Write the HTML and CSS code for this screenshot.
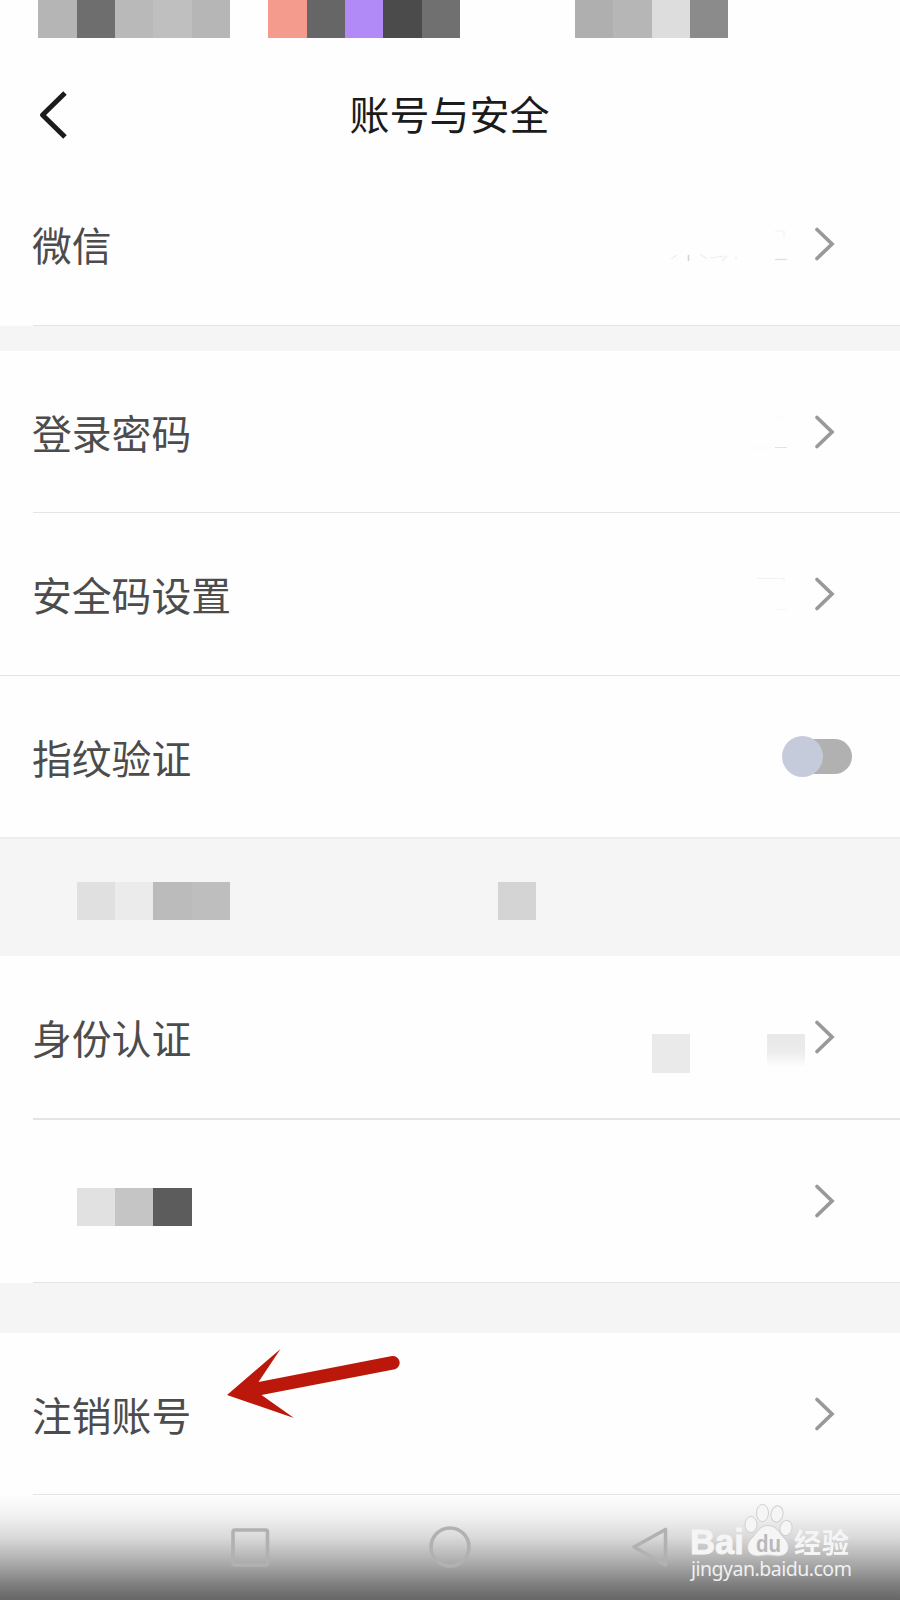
FILE: index.html
```
<!DOCTYPE html>
<html lang="zh-CN">
    <head>
        <meta charset="utf-8">
        <title>账号与安全</title>
        <link rel="stylesheet" href="styles.css">
    </head>

    <body>
        <!-- seta reutilizada em todas as linhas -->
        <svg class="sprite" aria-hidden="true">
            <symbol id="seta" viewBox="0 0 22 36">
                <path d="M3 3.5 18 18 3 32.5" fill="none" stroke="#999" stroke-width="3.7" stroke-linecap="round" />
            </symbol>
        </svg>
        <main class="tela">
            <div class="status">
                <div class="mosaico">
                    <i class="c-b5"></i><i class="c-6e"></i><i class="c-b9"></i><i class="c-bf"></i><i class="c-b6"></i>
                </div>
                <div class="mosaico status-meio">
                    <i class="c-coral"></i><i class="c-66"></i><i class="c-roxo"></i><i class="c-4b"></i><i class="c-70"></i>
                </div>
                <div class="mosaico status-fim">
                    <i class="c-af"></i><i class="c-b6"></i><i class="c-dd"></i><i class="c-8b"></i>
                </div>
            </div>

            <header class="header">
                <svg class="voltar" viewBox="0 0 30 50">
                    <path d="M27 3 4.5 25 27 47" fill="none" stroke="#1b1b1b" stroke-width="5" stroke-linejoin="round" />
                </svg>
                <h1>账号与安全</h1>
            </header>

            <section class="grupo">
                <div class="linha">
                    <span class="rotulo">微信</span>
                    <svg class="resto" viewBox="0 0 124 40" fill="none" stroke-width="1.2">
                        <path d="M8 35l6-4M37 30l7 5M47 34l14-2M59 37l5-5M73 36v-3" stroke="#eee" />
                        <path d="M25.5 31v6" stroke="#d4d4d4" stroke-width="1.6" />
                        <path d="M112 7h9v7" stroke="#f2f2f2" />
                        <path d="M112 35.5h12" stroke="#dcdcdc" />
                    </svg>
                    <svg class="seta"><use href="#seta" /></svg>
                </div>
            </section>

            <section class="grupo">
                <div class="linha">
                    <span class="rotulo">登录密码</span>
                    <svg class="resto" viewBox="0 0 124 40" fill="none" stroke-width="1">
                        <path d="M86 36h24M112 5h9v5" stroke="#fafafa" />
                        <path d="M112 35.5h12" stroke="#e2e2e2" />
                    </svg>
                    <svg class="seta"><use href="#seta" /></svg>
                </div>
                <div class="linha inteira">
                    <span class="rotulo">安全码设置</span>
                    <svg class="resto" viewBox="0 0 124 40" fill="none" stroke-width="1">
                        <path d="M94 4.5h27v4" stroke="#f2f2f2" />
                        <path d="M112 35.5h12" stroke="#f7f7f7" />
                    </svg>
                    <svg class="seta"><use href="#seta" /></svg>
                </div>
                <div class="linha inteira ultima">
                    <span class="rotulo">指纹验证</span>
                    <span class="chave"></span>
                </div>
            </section>

            <div class="faixa">
                <div class="mosaico">
                    <i class="c-e0"></i><i class="c-eb"></i><i class="c-bb"></i><i class="c-be"></i>
                </div>
                <div class="mosaico faixa-meio"><i class="c-d4"></i></div>
            </div>

            <section class="grupo">
                <div class="linha dupla">
                    <span class="rotulo">身份认证</span>
                    <div class="mosaico valor">
                        <i class="c-ea"></i><i></i><i></i><i class="some"></i>
                    </div>
                    <svg class="seta"><use href="#seta" /></svg>
                </div>
                <div class="linha">
                    <div class="mosaico oculto">
                        <i class="c-e1"></i><i class="c-c5"></i><i class="c-5c"></i>
                    </div>
                    <svg class="seta"><use href="#seta" /></svg>
                </div>
            </section>

            <section class="grupo sair">
                <div class="linha">
                    <span class="rotulo">注销账号</span>
                    <svg class="seta"><use href="#seta" /></svg>
                </div>
                <svg class="indicador" viewBox="0 0 174 72">
                    <path d="M1 47 54.5 1 32.5 34 166 8A6.8 6.8 0 0 1 169 21.2L35.5 47 68 70Z" fill="#bb180b" />
                </svg>
            </section>

            <nav class="nav">
                <svg viewBox="0 0 44 44"><rect x="5" y="5" width="34.5" height="35" rx="2" /></svg>
                <svg viewBox="0 0 44 44"><circle cx="22" cy="22" r="19" /></svg>
                <svg viewBox="0 0 44 44"><path d="M37.5 4.5V40L6 22Z" /></svg>
            </nav>

            <div class="marca">
                <svg class="logo" viewBox="0 0 162 56">
                    <g fill="#f5f5f5" stroke="#cfcfcf" stroke-width="1">
                        <ellipse cx="60" cy="21.5" rx="6" ry="8" />
                        <ellipse cx="71.5" cy="10" rx="6" ry="8.6" />
                        <ellipse cx="86" cy="11" rx="6" ry="8.2" transform="rotate(10 86 11)" />
                        <ellipse cx="95" cy="25" rx="6" ry="7.6" transform="rotate(12 95 25)" />
                        <path d="M77 22.5c8 0 11 7 16 12.500 7 6 6 18-6 18-4 0-6-1-10-1s-6 1-10 1c-12 0-13-12-6-18 5-5.500 8-12.500 16-12.500Z" />
                    </g>
                    <text class="logo-bai" x="-1" y="51" textLength="54" lengthAdjust="spacingAndGlyphs">Bai</text>
                    <text class="logo-du" x="65" y="48.500" textLength="25" lengthAdjust="spacingAndGlyphs">du</text>
                    <text class="logo-cn" x="103" y="50" textLength="55">经验</text>
                </svg>
                <span class="site">jingyan.baidu.com</span>
            </div>
        </main>
    </body>
</html>
```
FILE: styles.css
```
body {
    margin: 0;
    background-color: #fefefe;
    font-family: "Noto Sans CJK SC", sans-serif;
}

.sprite {
    display: none;
}

.tela {
    position: relative;
    width: 900px;
    height: 1600px;
    overflow: hidden;
}

/* blocos de mosaico */
.mosaico {
    display: flex;
}

.mosaico i {
    width: 38.33px;
    height: 38.33px;
}

.c-b5 { background-color: #b5b5b5; }
.c-6e { background-color: #6e6e6e; }
.c-b9 { background-color: #b9b9b9; }
.c-bf { background-color: #bfbfbf; }
.c-b6 { background-color: #b6b6b6; }
.c-coral { background-color: #f59b8d; }
.c-66 { background-color: #666; }
.c-roxo { background-color: #b28af8; }
.c-4b { background-color: #4b4b4b; }
.c-70 { background-color: #707070; }
.c-af { background-color: #afafaf; }
.c-dd { background-color: #ddd; }
.c-8b { background-color: #8b8b8b; }
.c-e0 { background-color: #e0e0e0; }
.c-eb { background-color: #ebebeb; }
.c-bb { background-color: #bbb; }
.c-be { background-color: #bebebe; }
.c-d4 { background-color: #d4d4d4; }
.c-ea { background-color: #eaeaea; }
.c-e1 { background-color: #e1e1e1; }
.c-c5 { background-color: #c5c5c5; }
.c-5c { background-color: #5c5c5c; }

.some {
    background: linear-gradient(#e8e8e8, #ececec 45%, #fefefe 85%);
}

.status {
    display: flex;
    height: 38px;
    padding-left: 38.33px;
    overflow: hidden;
}

.status-meio {
    margin-left: 38.33px;
}

.status-fim {
    margin-left: 115px;
}

.header {
    display: grid;
    grid-template-columns: 38px 1fr 38px;
    align-items: center;
    height: 125px;
}

.header h1 {
    grid-column: 2;
    grid-row: 1;
    margin: 0;
    padding-top: 27px;
    height: 125px;
    box-sizing: border-box;
    line-height: 96px;
    font-size: 40px;
    font-weight: 400;
    text-align: center;
    text-indent: -1px;
    color: #1b1b1b;
}

.voltar {
    grid-column: 2;
    grid-row: 1;
    width: 30px;
    height: 50px;
    margin-top: 29px;
}

.grupo + .grupo {
    border-top: 25px solid #f5f5f5;
}

.linha {
    display: flex;
    align-items: center;
    box-sizing: border-box;
    height: 163px;
    margin-left: 33px;
    padding-right: 64px;
    border-bottom: 1px solid #e4e4e4;
}

.grupo + .grupo .linha {
    height: 162px;
}

.grupo + .grupo .inteira {
    height: 163px;
    margin-left: 0;
    padding-left: 33px;
}

.grupo + .grupo .ultima {
    padding-right: 48px;
    border-bottom: 2px solid #eee;
}

.grupo .dupla {
    height: 164px;
    border-bottom: 2px solid #e4e4e4;
}

.rotulo {
    margin-right: auto;
    margin-left: -1px;
    font-size: 39.8px;
    line-height: 60px;
    color: #4c4c4c;
}

.seta {
    width: 22px;
    height: 36px;
    margin-left: 27px;
}

.resto {
    width: 124px;
    height: 40px;
}

.chave {
    position: relative;
    width: 66px;
    height: 35px;
    border-radius: 18px;
    background-color: #b1b1b1;
}

.chave::before {
    content: "";
    position: absolute;
    top: -3px;
    left: -4px;
    width: 41px;
    height: 41px;
    border-radius: 50%;
    background-color: #c6cbdc;
}

.faixa {
    display: flex;
    align-items: center;
    box-sizing: border-box;
    height: 117px;
    padding-left: 76.67px;
    padding-top: 7px;
    background-color: #f5f5f5;
}

.faixa-meio {
    margin-left: 268px;
}

.valor {
    margin-left: auto;
    margin-top: 33px;
}

.valor + .seta {
    margin-left: 9px;
}

.oculto {
    margin-left: 43.67px;
    margin-right: auto;
    margin-top: 12px;
}

.grupo + .sair {
    position: relative;
    border-top-width: 50px;
}

/* flecha vermelha por cima da linha */
.indicador {
    position: absolute;
    left: 226px;
    top: 15px;
    width: 174px;
    height: 72px;
}

.nav {
    display: grid;
    grid-template-columns: repeat(3, 200px);
    justify-content: center;
    justify-items: center;
    height: 105px;
    padding-top: 30px;
    box-sizing: border-box;
    background: linear-gradient(#fefefe 0, #f1f1f1 20%, #dadada 40%, #bcbcbc 56%, #a0a0a0 70%, #7d7d7d 86%, #666 100%);
}

.nav svg {
    width: 44px;
    height: 44px;
    fill: none;
    stroke: #b1b1b1;
    stroke-width: 3.6;
    stroke-linejoin: round;
}

/* marca d'água */
.marca {
    position: absolute;
    left: 691px;
    top: 1503px;
    width: 162px;
}

.logo {
    display: block;
    width: 162px;
    height: 56px;
    overflow: visible;
}

.logo text {
    font-weight: 700;
    fill: #f5f5f5;
}

.logo .logo-bai {
    font-family: "Liberation Sans", sans-serif;
    font-size: 35px;
    stroke: #f5f5f5;
    stroke-width: .8;
}

.logo .logo-du {
    font-family: "Liberation Sans", sans-serif;
    font-size: 23px;
    fill: #b9b9b9;
}

.logo .logo-cn {
    font-size: 27px;
}

.site {
    display: block;
    font-family: "Noto Sans", sans-serif;
    font-size: 19.5px;
    line-height: 20px;
    letter-spacing: -.5px;
    color: #f0f0f0;
    white-space: nowrap;
}
```
